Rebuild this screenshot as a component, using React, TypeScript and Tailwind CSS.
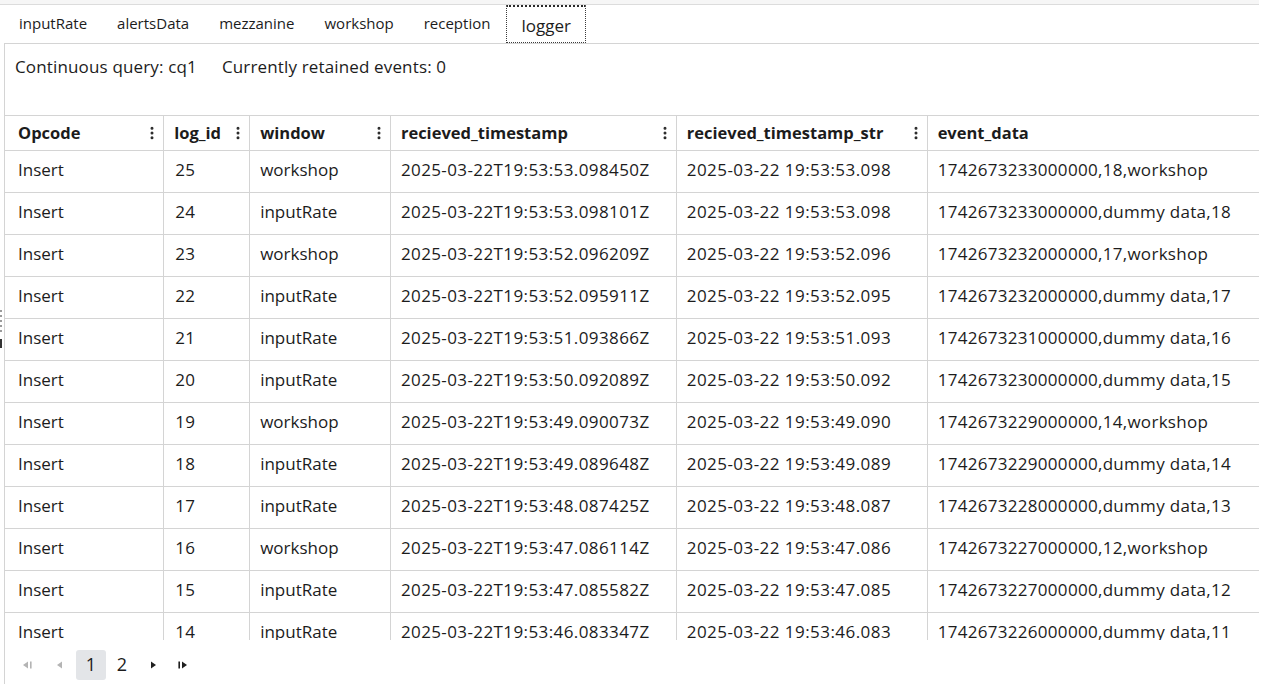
import { EllipsisVertical } from "lucide-react"

type Row = {
  id: number
  win: string
  ts: string
  tsStr: string
  data: string
}

const rows: Row[] = [
  { id: 25, win: "workshop", ts: "2025-03-22T19:53:53.098450Z", tsStr: "2025-03-22 19:53:53.098", data: "1742673233000000,18,workshop" },
  { id: 24, win: "inputRate", ts: "2025-03-22T19:53:53.098101Z", tsStr: "2025-03-22 19:53:53.098", data: "1742673233000000,dummy data,18" },
  { id: 23, win: "workshop", ts: "2025-03-22T19:53:52.096209Z", tsStr: "2025-03-22 19:53:52.096", data: "1742673232000000,17,workshop" },
  { id: 22, win: "inputRate", ts: "2025-03-22T19:53:52.095911Z", tsStr: "2025-03-22 19:53:52.095", data: "1742673232000000,dummy data,17" },
  { id: 21, win: "inputRate", ts: "2025-03-22T19:53:51.093866Z", tsStr: "2025-03-22 19:53:51.093", data: "1742673231000000,dummy data,16" },
  { id: 20, win: "inputRate", ts: "2025-03-22T19:53:50.092089Z", tsStr: "2025-03-22 19:53:50.092", data: "1742673230000000,dummy data,15" },
  { id: 19, win: "workshop", ts: "2025-03-22T19:53:49.090073Z", tsStr: "2025-03-22 19:53:49.090", data: "1742673229000000,14,workshop" },
  { id: 18, win: "inputRate", ts: "2025-03-22T19:53:49.089648Z", tsStr: "2025-03-22 19:53:49.089", data: "1742673229000000,dummy data,14" },
  { id: 17, win: "inputRate", ts: "2025-03-22T19:53:48.087425Z", tsStr: "2025-03-22 19:53:48.087", data: "1742673228000000,dummy data,13" },
  { id: 16, win: "workshop", ts: "2025-03-22T19:53:47.086114Z", tsStr: "2025-03-22 19:53:47.086", data: "1742673227000000,12,workshop" },
  { id: 15, win: "inputRate", ts: "2025-03-22T19:53:47.085582Z", tsStr: "2025-03-22 19:53:47.085", data: "1742673227000000,dummy data,12" },
  { id: 14, win: "inputRate", ts: "2025-03-22T19:53:46.083347Z", tsStr: "2025-03-22 19:53:46.083", data: "1742673226000000,dummy data,11" },
]

const tabs = ["inputRate", "alertsData", "mezzanine", "workshop", "reception", "logger"]

const columns = [
  { name: "Opcode", width: "w-[159px]", menu: true },
  { name: "log_id", width: "w-[86px]", menu: true },
  { name: "window", width: "w-[141px]", menu: true },
  { name: "recieved_timestamp", width: "w-[286px]", menu: true },
  { name: "recieved_timestamp_str", width: "w-[251px]", menu: true },
  { name: "event_data", width: "w-[332px]", menu: false },
]

function PageIcon({ dir, disabled }: { dir: "first" | "prev" | "next" | "last"; disabled?: boolean }) {
  const color = disabled ? "#b4b4b4" : "#1f1f1f"
  return (
    <svg width="12" height="10" viewBox="0 0 12 10" fill={color}>
      {dir === "first" && (
        <>
          <polygon points="1,5 6,1.5 6,8.5" />
          <rect x="8" y="1.5" width="1.6" height="7" />
        </>
      )}
      {dir === "prev" && <polygon points="3,5 8,1.5 8,8.5" />}
      {dir === "next" && <polygon points="9,5 4,1.5 4,8.5" />}
      {dir === "last" && (
        <>
          <rect x="2.4" y="1.5" width="1.6" height="7" />
          <polygon points="11,5 6,1.5 6,8.5" />
        </>
      )}
    </svg>
  )
}

const cell = "border-r border-[#d4d4d4] pb-[4px] pl-[10px] whitespace-nowrap"

export default function App() {
  return (
    <div className="relative h-[691px] w-[1273px] overflow-hidden bg-white font-['Open_Sans',sans-serif] text-[#1c1c1c]">
      {/* top strip */}
      <div className="h-[5px] w-[1259px] border-b border-[#dcdcdc] bg-[#f6f6f6]" />

      {/* tabs */}
      <div className="flex h-[38px] w-[1259px] items-stretch pl-[4px] text-[15px]">
        {tabs.map((tab) =>
          tab === "logger" ? (
            <div
              key={tab}
              className="ml-[1px] flex items-center border border-dotted border-[#3a3a3a] border-t-2 border-t-[#2a2a2a] bg-white px-[14px] pt-[3px] text-[17px]"
            >
              {tab}
            </div>
          ) : (
            <div key={tab} className="flex items-center px-[15px] pb-[2px]">
              {tab}
            </div>
          )
        )}
      </div>

      {/* panel */}
      <div className="ml-[4px] h-[641px] w-[1255px] border-l border-t border-[#d4d4d4]">
        <div className="flex h-[71px] items-start gap-[25px] pl-[10px] pt-[11px] text-[17px] leading-[24px] tracking-[0.15px]">
          <span>Continuous query: cq1</span>
          <span>Currently retained events: 0</span>
        </div>

        <div className="h-[525px] overflow-hidden">
          <table className="table-fixed border-collapse">
            <thead>
              <tr className="h-[35px] border-y border-[#d4d4d4] text-[16.5px]">
                {columns.map((c, i) => (
                  <th
                    key={c.name}
                    className={`${c.width} border-r border-[#d4d4d4] p-0 text-left font-bold ${i === columns.length - 1 ? "border-r-0" : ""}`}
                  >
                    <div className={`flex items-center justify-between pr-[3px] ${i === 0 ? "pl-[13px]" : "pl-[10px]"}`}>
                      <span>{c.name}</span>
                      {c.menu && <EllipsisVertical size={16} strokeWidth={2.5} className="text-[#2a2a2a]" />}
                    </div>
                  </th>
                ))}
              </tr>
            </thead>
            <tbody className="text-[17px]">
              {rows.map((r) => (
                <tr key={r.id} className="h-[42px] border-b border-[#d4d4d4]">
                  <td className="border-r border-[#d4d4d4] pb-[4px] pl-[13px]">Insert</td>
                  <td className={`${cell} pl-[11px] tracking-[0.4px]`}>{r.id}</td>
                  <td className={cell}>{r.win}</td>
                  <td className={`${cell} tracking-[0.4px]`}>{r.ts}</td>
                  <td className={`${cell} tracking-[0.45px]`}>{r.tsStr}</td>
                  <td className="whitespace-nowrap pb-[4px] pl-[10px] tracking-[0.3px]">{r.data}</td>
                </tr>
              ))}
            </tbody>
          </table>
        </div>

        {/* pagination */}
        <div className="flex h-[48px] items-center pl-[7px] pt-[1px] text-[18px]">
          <div className="flex w-[32px] justify-center">
            <PageIcon dir="first" disabled />
          </div>
          <div className="flex w-[32px] justify-center">
            <PageIcon dir="prev" disabled />
          </div>
          <div className="flex h-[30px] w-[30px] items-center justify-center rounded-[3px] bg-[#e3e5e8]">1</div>
          <div className="flex h-[30px] w-[32px] items-center justify-center">2</div>
          <div className="flex w-[30px] justify-center">
            <PageIcon dir="next" />
          </div>
          <div className="flex w-[28px] justify-center">
            <PageIcon dir="last" />
          </div>
        </div>
      </div>

      {/* splitter grip on left edge */}
      <div className="absolute left-0 top-[310px] flex flex-col gap-[3px]">
        {[0, 1, 2, 3, 4].map((d) => (
          <div key={d} className="h-[2px] w-[2px] bg-[#9a9a9a]" />
        ))}
        <div className="mt-[4px] h-[9px] w-[2px] bg-[#333]" />
      </div>
    </div>
  )
}
